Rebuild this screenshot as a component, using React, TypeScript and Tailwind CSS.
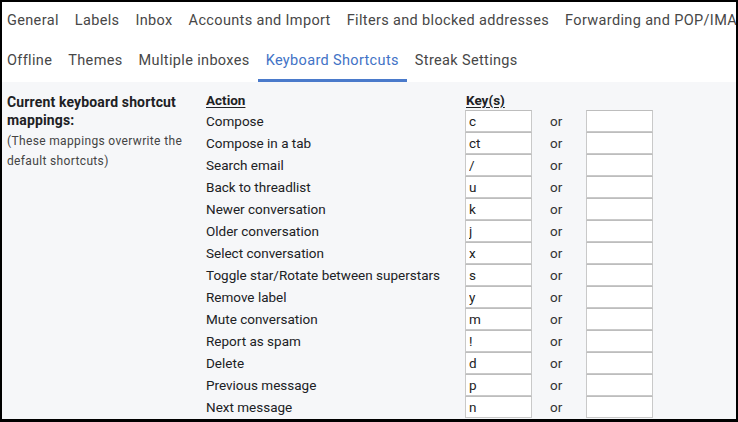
import React from "react";

const topTabs = ["General", "Labels", "Inbox", "Accounts and Import", "Filters and blocked addresses", "Forwarding and POP/IMAP"];
const secondTabs = ["Offline", "Themes", "Multiple inboxes", "Keyboard Shortcuts", "Streak Settings"];

const shortcuts: [string, string][] = [
  ["Compose", "c"],
  ["Compose in a tab", "ct"],
  ["Search email", "/"],
  ["Back to threadlist", "u"],
  ["Newer conversation", "k"],
  ["Older conversation", "j"],
  ["Select conversation", "x"],
  ["Toggle star/Rotate between superstars", "s"],
  ["Remove label", "y"],
  ["Mute conversation", "m"],
  ["Report as spam", "!"],
  ["Delete", "d"],
  ["Previous message", "p"],
  ["Next message", "n"],
];

const ACTIVE = "Keyboard Shortcuts";

const Tab = ({ label }: { label: string }) => {
  const active = label === ACTIVE;
  return (
    <div
      className={`h-10 px-2 flex items-center shrink-0 whitespace-nowrap border-b-[3px] ${
        active ? "border-[#4a7acb] text-[#4273c6]" : "border-transparent text-[#474747]"
      }`}
    >
      {label}
    </div>
  );
};

const KeyInput = ({ value }: { value: string }) => (
  <input
    readOnly
    value={value}
    className="w-[67px] h-[22px] bg-white border border-[#c9c9c9] border-t-[#bdbdbd] px-[3px] text-[13.5px] text-[#222] outline-none"
  />
);

export default function App() {
  return (
    <div
      className="w-[738px] h-[422px] overflow-hidden border-2 border-b-[3px] border-black bg-[#f6f7f9]"
      style={{ fontFamily: "Roboto, 'Liberation Sans', sans-serif" }}
    >
      {/* Tabs */}
      <header className="bg-white text-[14.5px] tracking-[0.35px] overflow-hidden">
        <div className="flex -ml-[3px]">
          {topTabs.map((t) => (
            <Tab key={t} label={t} />
          ))}
        </div>
        <div className="flex -ml-[3px]">
          {secondTabs.map((t) => (
            <Tab key={t} label={t} />
          ))}
        </div>
      </header>

      {/* Shortcut table */}
      <main className="flex pt-2 pl-[5px] text-[#202124]">
        <div className="w-[199px] shrink-0 pt-[3px]">
          <div className="font-bold text-[14px] tracking-[0.15px] leading-[18px] pr-5">Current keyboard shortcut mappings:</div>
          <div className="mt-[2px] text-[12px] tracking-[0.35px] leading-[20px] text-[#444] pr-2">
            (These mappings overwrite the default shortcuts)
          </div>
        </div>
        <div className="grid grid-cols-[259px_67px_54px_67px] text-[13.5px]">
          <div className="h-5 leading-5 font-bold underline underline-offset-2">Action</div>
          <div className="h-5 leading-5 font-bold underline underline-offset-2 pl-px">Key(s)</div>
          <div />
          <div />
          {shortcuts.map(([action, key]) => (
            <React.Fragment key={action}>
              <div className="h-[22px] leading-[22px] whitespace-nowrap">{action}</div>
              <KeyInput value={key} />
              <div className="h-[22px] leading-[22px] pl-[18px] text-[#333]">or</div>
              <KeyInput value="" />
            </React.Fragment>
          ))}
        </div>
      </main>
    </div>
  );
}
